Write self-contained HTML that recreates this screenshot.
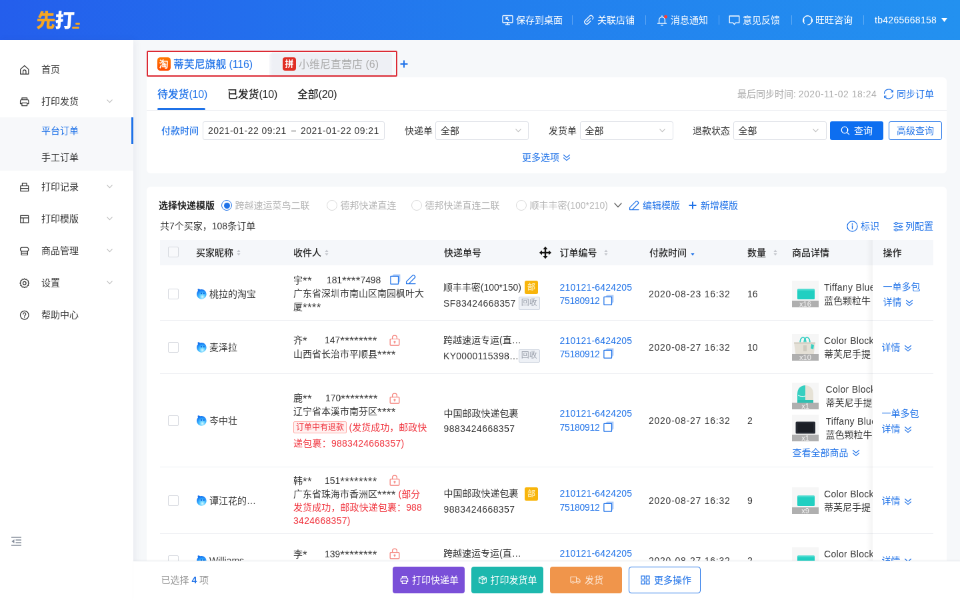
<!DOCTYPE html>
<html lang="zh-CN"><head><meta charset="utf-8"><title>先打</title>
<style>
*{box-sizing:border-box;margin:0;padding:0}
html,body{width:960px;height:600px;overflow:hidden;background:#f6f8fa}
#root{position:absolute;left:0;top:0;width:1440px;height:900px;transform:scale(0.6666667);transform-origin:0 0;will-change:transform;overflow:hidden;background:#f6f8fa;font-family:"Liberation Sans","Noto Sans CJK SC",sans-serif;font-size:14px;color:#333}
.a{position:absolute}
.t{position:absolute;white-space:nowrap;line-height:20px;font-size:14px}
.b{color:#1f72e8}
.g{color:#999}
.r{color:#f0323c}
.m{font-weight:500}
.cb{position:absolute;width:16px;height:16px;border:1px solid #d4d7dd;border-radius:2px;background:#fff}
.inp{position:absolute;border:1px solid #dcdfe6;border-radius:3px;background:#fff;height:28px}
.hl{position:absolute;height:1px;background:#e9ebef}
.btn{position:absolute;height:40px;width:108px;border-radius:4px}
.tag{position:absolute;font-size:12px;line-height:16px;height:18px;text-align:center;border-radius:2px;white-space:nowrap}
</style></head><body><div id="root">
<div class="a " style="left:0px;top:0px;width:1440px;height:60px;background:linear-gradient(90deg,#245eec 0%,#227dee 50%,#2391f0 100%)"></div>
<div class="a" style="left:53px;top:11px;font-size:29px;line-height:40px;font-weight:900;color:#fff;letter-spacing:-1px;white-space:nowrap;transform:skewX(-4deg);transform-origin:0 100%"><span style="color:#f5a623">先</span>打</div>
<div class="a " style="left:112.5px;top:33.8px;width:7.5px;height:3.7px;background:#f5a623;border-radius:1.85px"></div>
<div class="a " style="left:108px;top:39.8px;width:10.6px;height:3.7px;background:#f5a623;border-radius:1.85px"></div>
<svg class="a" style="left:753px;top:22px;" width="17" height="16" viewBox="0 0 17 16" fill="none"><rect x="1" y="1.5" width="15" height="10.5" rx="1" stroke="#fff" stroke-width="1.3" stroke-linecap="round" stroke-linejoin="round"/><path d="M5.5 14.8h6M8.5 12v2.8M6 4.5l4 4M6 4.5h2.6M6 4.5v2.6" stroke="#fff" stroke-width="1.3" stroke-linecap="round" stroke-linejoin="round"/></svg>
<div class="t " style="left:774px;top:20px;color:#fff">保存到桌面</div>
<div class="a " style="left:858px;top:23px;width:1px;height:14px;background:rgba(255,255,255,.28)"></div>
<svg class="a" style="left:875px;top:22px;" width="16" height="16" viewBox="0 0 16 16" fill="none"><g transform="rotate(45 8 8)"><path d="M11.200 7v5.200a3.200 3.200 0 0 1-6.400 0V3.200a3.200 3.200 0 0 1 6.400 0M8 4.600v7.400" stroke="#fff" stroke-width="1.3" stroke-linecap="round" stroke-linejoin="round"/></g></svg>
<div class="t " style="left:896px;top:20px;color:#fff">关联店铺</div>
<div class="a " style="left:968px;top:23px;width:1px;height:14px;background:rgba(255,255,255,.28)"></div>
<svg class="a" style="left:985px;top:21.5px;" width="16" height="17" viewBox="0 0 16 17" fill="none"><path d="M1.500 13.200h13M3.600 13.200V8a4.400 4.400 0 0 1 8.800 0v5.200M8 1.600v1.800M6.600 15.800h2.800" stroke="#fff" stroke-width="1.3" stroke-linecap="round" stroke-linejoin="round"/><circle cx="13.600" cy="3" r="2.500" fill="#ff3b30"/></svg>
<div class="t " style="left:1006px;top:20px;color:#fff">消息通知</div>
<div class="a " style="left:1078px;top:23px;width:1px;height:14px;background:rgba(255,255,255,.28)"></div>
<svg class="a" style="left:1093px;top:22.5px;" width="17" height="16" viewBox="0 0 17 16" fill="none"><path d="M1.200 1h14.600v10.200h-5.300L8.500 13.600 6.500 11.200H1.200z" stroke="#fff" stroke-width="1.3" stroke-linecap="round" stroke-linejoin="round"/></svg>
<div class="t " style="left:1114px;top:20px;color:#fff">意见反馈</div>
<div class="a " style="left:1187px;top:23px;width:1px;height:14px;background:rgba(255,255,255,.28)"></div>
<svg class="a" style="left:1202.5px;top:21.5px;" width="17" height="17" viewBox="0 0 17 17" fill="none"><path d="M3.600 13a6.700 6.700 0 1 1 7.600 1.600" stroke="#fff" stroke-width="1.3" stroke-linecap="round" stroke-linejoin="round"/><path d="M11.200 14.600l-2.400.5" stroke="#fff" stroke-width="1.3" stroke-linecap="round" stroke-linejoin="round"/><rect x="1" y="6.400" width="2.400" height="4.800" rx="1.200" fill="#fff"/><rect x="13.600" y="6.400" width="2.400" height="4.800" rx="1.200" fill="#fff"/></svg>
<div class="t " style="left:1223px;top:20px;color:#fff">旺旺咨询</div>
<div class="a " style="left:1295px;top:23px;width:1px;height:14px;background:rgba(255,255,255,.28)"></div>
<div class="t " style="left:1312px;top:20px;color:#fff;letter-spacing:.3px">tb4265668158</div>
<svg class="a" style="left:1412px;top:27px;" width="9" height="6" viewBox="0 0 9 6" fill="none"><path d="M0 0h9L4.5 6z" fill="#fff"/></svg>
<div class="a " style="left:0px;top:60px;width:200px;height:840px;background:#fff;box-shadow:3px 0 10px rgba(60,60,110,.07)"></div>
<div class="a " style="left:0px;top:176px;width:200px;height:80px;background:#f7f8fa"></div>
<div class="a " style="left:197px;top:176px;width:3px;height:40px;background:#1f72e8"></div>
<svg class="a" style="left:28.5px;top:96.5px;" width="15.5" height="15.5" viewBox="0 0 14 14" fill="none"><path d="M1.500 12.700V6.200L7 1.300l5.500 4.900v6.500zM5 12.700V9.200a2 2 0 0 1 4 0v3.500" stroke="#333" stroke-width="1.1" stroke-linecap="round" stroke-linejoin="round"/></svg>
<div class="t " style="left:62px;top:94px;">首页</div>
<svg class="a" style="left:28.5px;top:144.5px;" width="15.5" height="15.5" viewBox="0 0 14 14" fill="none"><path d="M3.5 4.2V1.6h7v2.6M3.5 12.4v-4h7v4zM1.4 9.6h2.1M10.5 9.6h2.1a0 0 0 0 0 0 0V5.8a1.6 1.6 0 0 0-1.6-1.6H3a1.6 1.6 0 0 0-1.6 1.6v3.8" stroke="#333" stroke-width="1.1" stroke-linecap="round" stroke-linejoin="round"/></svg>
<div class="t " style="left:62px;top:142px;">打印发货</div>
<svg class="a" style="left:160px;top:149px;" width="9" height="6" viewBox="0 0 9 6" fill="none"><path d="M0.8 0.8l3.7 3.9 3.7-3.9" stroke="#bbb" stroke-width="1.1" stroke-linecap="round" stroke-linejoin="round"/></svg>
<div class="t b" style="left:62px;top:186px;">平台订单</div>
<div class="t " style="left:62px;top:226px;">手工订单</div>
<svg class="a" style="left:28.5px;top:272.5px;" width="15.5" height="15.5" viewBox="0 0 14 14" fill="none"><path d="M1.6 5.2h10.8v7.2H1.6zM4 5.2V1.6h6v3.6M1.6 8.6h10.8" stroke="#333" stroke-width="1.1" stroke-linecap="round" stroke-linejoin="round"/></svg>
<div class="t " style="left:62px;top:270px;">打印记录</div>
<svg class="a" style="left:160px;top:277px;" width="9" height="6" viewBox="0 0 9 6" fill="none"><path d="M0.8 0.8l3.7 3.9 3.7-3.9" stroke="#bbb" stroke-width="1.1" stroke-linecap="round" stroke-linejoin="round"/></svg>
<svg class="a" style="left:28.5px;top:320.5px;" width="15.5" height="15.5" viewBox="0 0 14 14" fill="none"><path d="M1.6 2.2h10.8v9.6H1.6zM1.6 5.4h10.8M5.4 5.4v6.4" stroke="#333" stroke-width="1.1" stroke-linecap="round" stroke-linejoin="round"/></svg>
<div class="t " style="left:62px;top:318px;">打印模版</div>
<svg class="a" style="left:160px;top:325px;" width="9" height="6" viewBox="0 0 9 6" fill="none"><path d="M0.8 0.8l3.7 3.9 3.7-3.9" stroke="#bbb" stroke-width="1.1" stroke-linecap="round" stroke-linejoin="round"/></svg>
<svg class="a" style="left:28.5px;top:368.5px;" width="15.5" height="15.5" viewBox="0 0 14 14" fill="none"><path d="M2.8 7.2v5h8.4v-5M1.4 4.6a2.6 2.6 0 0 1 2.6-2.6h6a2.6 2.6 0 0 1 2.6 2.6v0a2.6 2.6 0 0 1-2.6 2.6H4a2.6 2.6 0 0 1-2.6-2.6zM2.8 9.8h8.4" stroke="#333" stroke-width="1.1" stroke-linecap="round" stroke-linejoin="round"/></svg>
<div class="t " style="left:62px;top:366px;">商品管理</div>
<svg class="a" style="left:160px;top:373px;" width="9" height="6" viewBox="0 0 9 6" fill="none"><path d="M0.8 0.8l3.7 3.9 3.7-3.9" stroke="#bbb" stroke-width="1.1" stroke-linecap="round" stroke-linejoin="round"/></svg>
<svg class="a" style="left:28.5px;top:416.5px;" width="15.5" height="15.5" viewBox="0 0 14 14" fill="none"><circle cx="7" cy="7" r="2.1" stroke="#333" stroke-width="1.1" stroke-linecap="round" stroke-linejoin="round"/><path d="M7 1.3l1.3 1.2 1.8-.4.6 1.7 1.7.6-.4 1.8L13.2 7.4 12 8.7l.4 1.8-1.7.6-.6 1.7-1.8-.4L7 13.6 5.7 12.4l-1.8.4-.6-1.7-1.7-.6.4-1.8L.8 7.4 2 6.1l-.4-1.8 1.7-.6.6-1.7 1.8.4z" stroke="#333" stroke-width="1.1" stroke-linecap="round" stroke-linejoin="round" transform="translate(0 -0.4)"/></svg>
<div class="t " style="left:62px;top:414px;">设置</div>
<svg class="a" style="left:160px;top:421px;" width="9" height="6" viewBox="0 0 9 6" fill="none"><path d="M0.8 0.8l3.7 3.9 3.7-3.9" stroke="#bbb" stroke-width="1.1" stroke-linecap="round" stroke-linejoin="round"/></svg>
<svg class="a" style="left:28.5px;top:464.5px;" width="15.5" height="15.5" viewBox="0 0 14 14" fill="none"><circle cx="7" cy="7" r="5.7" stroke="#333" stroke-width="1.1" stroke-linecap="round" stroke-linejoin="round"/><path d="M5.2 5.6a1.8 1.8 0 1 1 2.6 1.6c-.5.3-.8.7-.8 1.3M7 10.2v.2" stroke="#333" stroke-width="1.1" stroke-linecap="round" stroke-linejoin="round"/></svg>
<div class="t " style="left:62px;top:462px;">帮助中心</div>
<svg class="a" style="left:16.5px;top:805px;" width="15" height="14" viewBox="0 0 15 14" fill="none"><path d="M0 1h15M6.500 5h8.500M6.500 9h8.500M0 13h15" stroke="#858d9b" stroke-width="1.300"/><path d="M0.300 7l4.200-3v6z" fill="#858d9b"/></svg>
<div class="a " style="left:220px;top:116px;width:1200px;height:144px;background:#fff;border-radius:0 6px 6px 6px"></div>
<div class="a " style="left:222px;top:78px;width:186px;height:38px;background:#fff"></div>
<div class="a " style="left:404px;top:80px;width:184px;height:36px;background:linear-gradient(90deg,#f6f7fa,#eef0f5 5px);border-radius:4px 4px 0 0"></div>
<div class="a " style="left:235.5px;top:86px;width:20px;height:20px;background:linear-gradient(180deg,#ff7a00,#ff4a00);border-radius:4.5px;color:#fff;font-size:14px;line-height:20px;text-align:center;font-weight:bold">淘</div>
<div class="t " style="left:260px;top:87px;font-size:16px;font-weight:500;color:#1f72e8;letter-spacing:-.15px">蒂芙尼旗舰 (116)</div>
<div class="a " style="left:424px;top:86px;width:20px;height:20px;background:#e02e24;border-radius:4px;color:#fff;font-size:13px;line-height:20px;text-align:center;font-weight:bold">拼</div>
<div class="t " style="left:448px;top:87px;font-size:16px;color:#aaa">小维尼直营店 (6)</div>
<div class="a " style="left:220px;top:76px;width:376px;height:39px;border:2px solid #dc2b35;border-radius:2px"></div>
<svg class="a" style="left:600px;top:90px;" width="12" height="12" viewBox="0 0 12 12" fill="none"><path d="M6 0.5v11M0.5 6h11" stroke="#1f72e8" stroke-width="2"/></svg>
<div class="t " style="left:236px;top:132px;font-size:16px;font-weight:500;color:#1f72e8;letter-spacing:-.2px">待发货(10)</div>
<div class="t " style="left:341px;top:132px;font-size:16px;font-weight:500;color:#222;letter-spacing:-.2px">已发货(10)</div>
<div class="t " style="left:446px;top:132px;font-size:16px;font-weight:500;color:#222;letter-spacing:-.2px">全部(20)</div>
<div class="a " style="left:236px;top:162px;width:72px;height:3px;background:#1f72e8;border-radius:2px"></div>
<div class="a " style="left:220px;top:165px;width:1200px;height:1px;background:#eceef2"></div>
<div class="t " style="left:1106px;top:131px;color:#aaa">最后同步时间: <span style="letter-spacing:.5px">2020-11-02 18:24</span></div>
<svg class="a" style="left:1324.5px;top:132.5px;" width="16" height="16" viewBox="0 0 16 16" fill="none"><path d="M1.500 7.200a6.500 6.500 0 0 1 12.400-2.400M14.500 8.800a6.500 6.500 0 0 1-12.400 2.400M14.300 2.400v2.600h-2.600M1.700 13.600v-2.600h2.600" stroke="#1f72e8" stroke-width="1.200" stroke-linecap="round" stroke-linejoin="round"/></svg>
<div class="t b" style="left:1345px;top:131px;">同步订单</div>
<div class="t b" style="left:242px;top:186px;font-weight:500">付款时间</div>
<div class="a inp" style="left:304px;top:182px;width:273px;height:28px;"></div>
<div class="t " style="left:312px;top:186px;color:#333;letter-spacing:.45px">2021-01-22 09:21</div>
<div class="a " style="left:436.5px;top:195.5px;width:7.5px;height:1.2px;background:#444"></div>
<div class="t " style="left:451px;top:186px;color:#333;letter-spacing:.45px">2021-01-22 09:21</div>
<div class="t " style="left:607px;top:186px;">快递单</div>
<div class="a inp" style="left:653px;top:182px;width:140px;height:28px;"></div>
<div class="t " style="left:661px;top:186px;">全部</div>
<svg class="a" style="left:772.5px;top:193px;" width="9" height="6" viewBox="0 0 9 6" fill="none"><path d="M0.8 0.8l3.7 3.9 3.7-3.9" stroke="#bbb" stroke-width="1.1" stroke-linecap="round" stroke-linejoin="round"/></svg>
<div class="t " style="left:823px;top:186px;">发货单</div>
<div class="a inp" style="left:869.5px;top:182px;width:140px;height:28px;"></div>
<div class="t " style="left:877.5px;top:186px;">全部</div>
<svg class="a" style="left:989.0px;top:193px;" width="9" height="6" viewBox="0 0 9 6" fill="none"><path d="M0.8 0.8l3.7 3.9 3.7-3.9" stroke="#bbb" stroke-width="1.1" stroke-linecap="round" stroke-linejoin="round"/></svg>
<div class="t " style="left:1039px;top:186px;">退款状态</div>
<div class="a inp" style="left:1099.5px;top:182px;width:140px;height:28px;"></div>
<div class="t " style="left:1107.5px;top:186px;">全部</div>
<svg class="a" style="left:1219.0px;top:193px;" width="9" height="6" viewBox="0 0 9 6" fill="none"><path d="M0.8 0.8l3.7 3.9 3.7-3.9" stroke="#bbb" stroke-width="1.1" stroke-linecap="round" stroke-linejoin="round"/></svg>
<div class="a " style="left:1245px;top:182px;width:80px;height:28px;background:#0d6ef0;border-radius:3px"></div>
<svg class="a" style="left:1261px;top:189px;" width="14" height="14" viewBox="0 0 14 14" fill="none"><circle cx="6" cy="6" r="4.8" stroke="#fff" stroke-width="1.3"/><path d="M9.6 9.6l3 3" stroke="#fff" stroke-width="1.3" stroke-linecap="round"/></svg>
<div class="t " style="left:1281px;top:186px;color:#fff">查询</div>
<div class="a " style="left:1333px;top:182px;width:80px;height:28px;background:#fff;border:1px solid #1f72e8;border-radius:3px"></div>
<div class="t b" style="left:1345px;top:186px;">高级查询</div>
<div class="t b" style="left:783px;top:225.5px;">更多选项</div>
<svg class="a" style="left:844px;top:230.5px;" width="12" height="11" viewBox="0 0 12 11" fill="none"><path d="M1.5 1.5l4.5 3.8 4.5-3.8M1.5 5.8l4.5 3.8 4.5-3.8" stroke="#1f72e8" stroke-width="1.2" stroke-linecap="round" stroke-linejoin="round"/></svg>
<div class="a " style="left:220px;top:280px;width:1200px;height:640px;background:#fff;border-radius:6px"></div>
<div class="t " style="left:238px;top:298px;font-weight:bold;color:#222">选择快递模版</div>
<div class="a " style="left:332px;top:300px;width:16px;height:16px;border:1px solid #1f72e8;border-radius:50%;background:#fff"></div>
<div class="a " style="left:335.5px;top:303.5px;width:9px;height:9px;border-radius:50%;background:#1f72e8"></div>
<div class="t " style="left:352.5px;top:298px;color:#b4b4b4">跨越速运菜鸟二联</div>
<div class="a " style="left:490px;top:300px;width:16px;height:16px;border:1px solid #d9d9d9;border-radius:50%;background:#fff"></div>
<div class="t " style="left:510.5px;top:298px;color:#b4b4b4">德邦快递直连</div>
<div class="a " style="left:617px;top:300px;width:16px;height:16px;border:1px solid #d9d9d9;border-radius:50%;background:#fff"></div>
<div class="t " style="left:637.5px;top:298px;color:#b4b4b4">德邦快递直连二联</div>
<div class="a " style="left:774px;top:300px;width:16px;height:16px;border:1px solid #d9d9d9;border-radius:50%;background:#fff"></div>
<div class="t " style="left:794.5px;top:298px;color:#b4b4b4">顺丰丰密(100*210)</div>
<svg class="a" style="left:921px;top:304px;" width="12" height="8" viewBox="0 0 12 8" fill="none"><path d="M1 1l5 5.4 5-5.4" stroke="#666" stroke-width="1.4" stroke-linecap="round" stroke-linejoin="round"/></svg>
<svg class="a" style="left:943px;top:300px;" width="16" height="16" viewBox="0 0 16 16" fill="none"><path d="M1.600 14.600h13.400M1.600 14.600v-3.200l9.300-9.300a1.600 1.600 0 0 1 2.300 0l1.100 1.100a1.600 1.600 0 0 1 0 2.300l-9.100 9.100" stroke="#1f72e8" stroke-width="1.300" stroke-linecap="round" stroke-linejoin="round"/></svg>
<div class="t b" style="left:964px;top:298px;">编辑模版</div>
<svg class="a" style="left:1033px;top:302px;" width="12" height="12" viewBox="0 0 12 12" fill="none"><path d="M6 0.5v11M0.5 6h11" stroke="#1f72e8" stroke-width="2"/></svg>
<div class="t b" style="left:1051px;top:298px;">新增模版</div>
<div class="t " style="left:240px;top:329px;color:#333">共7个买家，108条订单</div>
<svg class="a" style="left:1270px;top:330.5px;" width="17" height="17" viewBox="0 0 17 17" fill="none"><circle cx="8.500" cy="8.500" r="7.600" stroke="#1f72e8" stroke-width="1.200"/><path d="M8.500 7.600v4.600" stroke="#1f72e8" stroke-width="1.400" stroke-linecap="round"/><circle cx="8.500" cy="5" r=".95" fill="#1f72e8"/></svg>
<div class="t b" style="left:1291px;top:329px;">标识</div>
<svg class="a" style="left:1339.5px;top:332.5px;" width="15" height="14" viewBox="0 0 15 14" fill="none"><path d="M1 2.200h13M1 7h13M1 11.800h13" stroke="#1f72e8" stroke-width="1.300" stroke-linecap="round"/><circle cx="4.200" cy="2.200" r="1.700" fill="#fff" stroke="#1f72e8" stroke-width="1.200"/><circle cx="10.600" cy="7" r="1.700" fill="#fff" stroke="#1f72e8" stroke-width="1.200"/><circle cx="4.200" cy="11.800" r="1.700" fill="#fff" stroke="#1f72e8" stroke-width="1.200"/></svg>
<div class="t b" style="left:1358px;top:329px;">列配置</div>
<div class="a " style="left:240px;top:360px;width:1160px;height:38px;background:#f5f7fa"></div>
<div class="cb" style="left:252px;top:370px;background:#f8f9fb"></div>
<div class="t " style="left:294px;top:368.5px;font-weight:500;color:#222">买家昵称</div>
<svg class="a" style="left:354.5px;top:374px;" width="6" height="10" viewBox="0 0 6 10" fill="none"><path d="M3 0.6L5.6 4H0.4z" fill="#c5c8ce"/><path d="M3 9.4L5.6 6H0.4z" fill="#c5c8ce"/></svg>
<div class="t " style="left:440px;top:368.5px;font-weight:500;color:#222">收件人</div>
<svg class="a" style="left:486.5px;top:374px;" width="6" height="10" viewBox="0 0 6 10" fill="none"><path d="M3 0.6L5.6 4H0.4z" fill="#c5c8ce"/><path d="M3 9.4L5.6 6H0.4z" fill="#c5c8ce"/></svg>
<div class="t " style="left:666px;top:368.5px;font-weight:500;color:#222">快递单号</div>
<div class="t " style="left:839.5px;top:368.5px;font-weight:500;color:#222">订单编号</div>
<svg class="a" style="left:906px;top:374px;" width="6" height="10" viewBox="0 0 6 10" fill="none"><path d="M3 0.6L5.6 4H0.4z" fill="#c5c8ce"/><path d="M3 9.4L5.6 6H0.4z" fill="#c5c8ce"/></svg>
<div class="t " style="left:974px;top:368.5px;font-weight:500;color:#222">付款时间</div>
<svg class="a" style="left:1035.5px;top:374px;" width="6" height="10" viewBox="0 0 6 10" fill="none"><path d="M3 0.6L5.6 4H0.4z" fill="#f5f7fa"/><path d="M3 9.4L5.6 6H0.4z" fill="#1f72e8"/></svg>
<div class="t " style="left:1121px;top:368.5px;font-weight:500;color:#222">数量</div>
<svg class="a" style="left:1160px;top:374px;" width="6" height="10" viewBox="0 0 6 10" fill="none"><path d="M3 0.6L5.6 4H0.4z" fill="#c5c8ce"/><path d="M3 9.4L5.6 6H0.4z" fill="#c5c8ce"/></svg>
<div class="t " style="left:1188px;top:368.5px;font-weight:500;color:#222">商品详情</div>
<svg class="a" style="left:808px;top:368.5px;" width="20" height="20" viewBox="0 0 20 20" fill="none"><path d="M10 0.8L13.6 5H11.2V8.8H15V6.4L19.2 10 15 13.6V11.2H11.2V15H13.6L10 19.2 6.4 15H8.8V11.2H5V13.6L0.8 10 5 6.4V8.8H8.8V5H6.4z" fill="#111" stroke="#fff" stroke-width="1" stroke-linejoin="round" paint-order="stroke"/></svg>
<svg width="0" height="0" style="position:absolute"><defs><radialGradient id="ww" cx=".58" cy=".78" r=".72"><stop offset="0" stop-color="#d4f9ff"/><stop offset=".42" stop-color="#4fc6ff"/><stop offset=".85" stop-color="#1a86f7"/><stop offset="1" stop-color="#1672ee"/></radialGradient></defs></svg>
<div class="cb" style="left:252px;top:433px"></div>
<svg class="a" style="left:293.5px;top:432.2px;" width="16.5" height="17.6" viewBox="0 0 15 16" fill="none"><path d="M2.6 1.2c1.2-.2 2.3.2 3 .9a6.6 6.6 0 0 1 2-.3c3.7 0 6.6 3 6.6 6.7s-2.900 6.700-6.600 6.700S1 12.200 1 8.500c0-1.800.7-3.400 1.800-4.600-.5-.8-.6-1.800-.2-2.700z" fill="url(#ww)"/><ellipse cx="7.400" cy="7.400" rx=".8" ry="1" fill="#0b55d8"/><ellipse cx="10.800" cy="7.400" rx=".8" ry="1" fill="#0b55d8"/></svg>
<div class="t " style="left:314px;top:430.5px;">桃拉的淘宝</div>
<div class="t " style="left:440px;top:409.5px;">宇<span style="font-size:17px;letter-spacing:.3px;position:relative;top:2.3px;line-height:10px">**</span></div>
<div class="t " style="left:490px;top:409.5px;letter-spacing:-.15px">181<span style="font-size:17px;letter-spacing:.3px;position:relative;top:2.3px;line-height:10px">****</span>7498</div>
<svg class="a" style="left:584.5px;top:410.5px;" width="16" height="16" viewBox="0 0 16 16" fill="none"><path d="M2.600 3.600l2.800-3h10v10.400l-2.800 2.800z" fill="#a9c9f8"/><rect x=".9" y="3.400" width="11.600" height="11.600" rx=".3" fill="#fff" stroke="#1f72e8" stroke-width="1.250"/></svg>
<svg class="a" style="left:608px;top:410.5px;" width="16" height="16" viewBox="0 0 16 16" fill="none"><path d="M1.600 14.600h13.400M1.600 14.600v-3.200l9.300-9.300a1.600 1.600 0 0 1 2.300 0l1.100 1.100a1.600 1.600 0 0 1 0 2.300l-9.100 9.100" stroke="#1f72e8" stroke-width="1.300" stroke-linecap="round" stroke-linejoin="round"/></svg>
<div class="t " style="left:440px;top:429.5px;">广东省深圳市南山区南园枫叶大</div>
<div class="t " style="left:440px;top:449.5px;">厦<span style="font-size:17px;letter-spacing:.3px;position:relative;top:2.3px;line-height:10px">****</span></div>
<div class="t " style="left:665px;top:420.5px;letter-spacing:-.05px">顺丰丰密(100*150)</div>
<div class="a " style="left:787px;top:421px;width:20px;height:20px;background:#f8b50c;border-radius:2.5px;color:#fff1c4;font-size:12px;font-weight:500;line-height:20px;text-align:center">部</div>
<div class="t " style="left:665px;top:445px;letter-spacing:.4px">SF83424668357</div>
<div class="a " style="left:778px;top:445px;width:31.5px;height:19.5px;background:#eef1f6;border:1px solid #cdd4df;border-radius:2px;color:#9aa0ab;font-size:12px;line-height:17.5px;text-align:center">回收</div>
<div class="t b" style="left:839.5px;top:420.5px;letter-spacing:.2px">210121-6424205</div>
<div class="t b" style="left:839.5px;top:441px;letter-spacing:-.3px">75180912</div>
<svg class="a" style="left:904.5px;top:442.0px;" width="16" height="16" viewBox="0 0 16 16" fill="none"><path d="M2.600 3.600l2.800-3h10v10.400l-2.800 2.800z" fill="#a9c9f8"/><rect x=".9" y="3.400" width="11.600" height="11.600" rx=".3" fill="#fff" stroke="#1f72e8" stroke-width="1.250"/></svg>
<div class="t " style="left:973px;top:431px;letter-spacing:.75px">2020-08-23 16:32</div>
<div class="t " style="left:1121px;top:431px;">16</div>
<svg class="a" style="left:1188px;top:421px;" width="40" height="40" viewBox="0 0 40 40" fill="none"><rect width="40" height="40" fill="#f6f6f6"/><rect x="8" y="12.5" width="26" height="15.5" rx="1.5" fill="#21cfc1"/><rect x="8" y="12.5" width="26" height="2.2" rx="1" fill="#4adbd0"/><rect y="30" width="40" height="10" fill="#a8a8a8" fill-opacity=".92"/><text x="20" y="39" font-size="11" fill="#f4f4f4" text-anchor="middle" font-family="Liberation Sans, sans-serif">x16</text></svg>
<div class="a" style="left:1236px;top:421px;width:73px;height:40px;overflow:hidden"><div class="t" style="left:0;top:0;letter-spacing:.3px">Tiffany Blue</div><div class="t" style="left:0;top:20px">蓝色颗粒牛</div></div>
<div class="a " style="left:240px;top:480px;width:1160px;height:1px;background:#eceef2"></div>
<div class="cb" style="left:252px;top:513px"></div>
<svg class="a" style="left:293.5px;top:512.2px;" width="16.5" height="17.6" viewBox="0 0 15 16" fill="none"><path d="M2.6 1.2c1.2-.2 2.3.2 3 .9a6.6 6.6 0 0 1 2-.3c3.7 0 6.6 3 6.6 6.7s-2.900 6.700-6.600 6.700S1 12.200 1 8.500c0-1.800.7-3.400 1.800-4.600-.5-.8-.6-1.800-.2-2.700z" fill="url(#ww)"/><ellipse cx="7.400" cy="7.400" rx=".8" ry="1" fill="#0b55d8"/><ellipse cx="10.800" cy="7.400" rx=".8" ry="1" fill="#0b55d8"/></svg>
<div class="t " style="left:314px;top:510.5px;">麦泽拉</div>
<div class="t " style="left:440px;top:500px;">齐<span style="font-size:17px;letter-spacing:.3px;position:relative;top:2.3px;line-height:10px">*</span></div>
<div class="t " style="left:487px;top:500px;">147<span style="font-size:17px;letter-spacing:.3px;position:relative;top:2.3px;line-height:10px">********</span></div>
<svg class="a" style="left:584px;top:501.5px;" width="16" height="17" viewBox="0 0 16 17" fill="none"><rect x="1.200" y="6.600" width="13.600" height="9.400" rx="1" stroke="#f47f78" stroke-width="1.300"/><path d="M4.600 6.600V4.600a3.400 3.400 0 0 1 6.800 0v.8" stroke="#f47f78" stroke-width="1.300" stroke-linecap="round"/><path d="M8 9.800v3M6.800 10.800h2.400" stroke="#f47f78" stroke-width="1.300" stroke-linecap="round"/></svg>
<div class="t " style="left:440px;top:520.5px;">山西省长治市平顺县<span style="font-size:17px;letter-spacing:.3px;position:relative;top:2.3px;line-height:10px">****</span></div>
<div class="t " style="left:665px;top:499.5px;">跨越速运专运(直…</div>
<div class="t " style="left:665px;top:524px;letter-spacing:.3px">KY0000115398…</div>
<div class="a " style="left:778px;top:524px;width:31.5px;height:19.5px;background:#eef1f6;border:1px solid #cdd4df;border-radius:2px;color:#9aa0ab;font-size:12px;line-height:17.5px;text-align:center">回收</div>
<div class="t b" style="left:839.5px;top:500.5px;letter-spacing:.2px">210121-6424205</div>
<div class="t b" style="left:839.5px;top:521px;letter-spacing:-.3px">75180912</div>
<svg class="a" style="left:904.5px;top:522.0px;" width="16" height="16" viewBox="0 0 16 16" fill="none"><path d="M2.600 3.600l2.800-3h10v10.400l-2.800 2.800z" fill="#a9c9f8"/><rect x=".9" y="3.400" width="11.600" height="11.600" rx=".3" fill="#fff" stroke="#1f72e8" stroke-width="1.250"/></svg>
<div class="t " style="left:973px;top:511px;letter-spacing:.75px">2020-08-27 16:32</div>
<div class="t " style="left:1121px;top:511px;">10</div>
<svg class="a" style="left:1188px;top:501px;" width="40" height="40" viewBox="0 0 40 40" fill="none"><rect width="40" height="40" fill="#f6f6f6"/><path d="M12 14c0-12 9-12 9 0M18 14c0-12 9-12 9 0" stroke="#35cfc2" stroke-width="1.7" fill="none"/><path d="M3 12.5h32l-2.500 19H5.500z" fill="#e4e0d6"/><path d="M3 12.5h32l-.3 2.200H3.300z" fill="#d3cfc4"/><rect x="17" y="17" width="5" height="9" fill="#cfcbc0"/><path d="M29 15l4 1.500-1 6.500-4-1.500z" fill="#35cfc2"/><rect y="30" width="40" height="10" fill="#a8a8a8" fill-opacity=".92"/><text x="20" y="39" font-size="11" fill="#f4f4f4" text-anchor="middle" font-family="Liberation Sans, sans-serif">x10</text></svg>
<div class="a" style="left:1236px;top:501px;width:73px;height:40px;overflow:hidden"><div class="t" style="left:0;top:0;letter-spacing:.3px">Color Block</div><div class="t" style="left:0;top:20px">蒂芙尼手提</div></div>
<div class="a " style="left:240px;top:560px;width:1160px;height:1px;background:#eceef2"></div>
<div class="cb" style="left:252px;top:623px"></div>
<svg class="a" style="left:293.5px;top:622.2px;" width="16.5" height="17.6" viewBox="0 0 15 16" fill="none"><path d="M2.6 1.2c1.2-.2 2.3.2 3 .9a6.6 6.6 0 0 1 2-.3c3.7 0 6.6 3 6.6 6.7s-2.900 6.700-6.600 6.700S1 12.200 1 8.500c0-1.800.7-3.400 1.800-4.600-.5-.8-.6-1.800-.2-2.700z" fill="url(#ww)"/><ellipse cx="7.400" cy="7.400" rx=".8" ry="1" fill="#0b55d8"/><ellipse cx="10.800" cy="7.400" rx=".8" ry="1" fill="#0b55d8"/></svg>
<div class="t " style="left:314px;top:620.5px;">岑中壮</div>
<div class="t " style="left:440px;top:587px;">鹿<span style="font-size:17px;letter-spacing:.3px;position:relative;top:2.3px;line-height:10px">**</span></div>
<div class="t " style="left:488px;top:587px;">170<span style="font-size:17px;letter-spacing:.3px;position:relative;top:2.3px;line-height:10px">********</span></div>
<svg class="a" style="left:584px;top:588.5px;" width="16" height="17" viewBox="0 0 16 17" fill="none"><rect x="1.200" y="6.600" width="13.600" height="9.400" rx="1" stroke="#f47f78" stroke-width="1.300"/><path d="M4.600 6.600V4.600a3.400 3.400 0 0 1 6.800 0v.8" stroke="#f47f78" stroke-width="1.300" stroke-linecap="round"/><path d="M8 9.800v3M6.800 10.800h2.400" stroke="#f47f78" stroke-width="1.300" stroke-linecap="round"/></svg>
<div class="t " style="left:440px;top:606.5px;">辽宁省本溪市南芬区<span style="font-size:17px;letter-spacing:.3px;position:relative;top:2.3px;line-height:10px">****</span></div>
<div class="a " style="left:440px;top:632px;width:80px;height:18px;background:#fff1f0;border:1px solid #ffa8a3;border-radius:2px;color:#f0323c;font-size:12px;line-height:16px;text-align:center">订单中有退款</div>
<div class="t r" style="left:523.5px;top:630.5px;">(发货成功，邮政快</div>
<div class="t r" style="left:440px;top:655px;letter-spacing:.25px">递包裹：9883424668357)</div>
<div class="t " style="left:665.5px;top:609.5px;">中国邮政快递包裹</div>
<div class="t " style="left:665.5px;top:633px;letter-spacing:.45px">9883424668357</div>
<div class="t b" style="left:839.5px;top:610.0px;letter-spacing:.2px">210121-6424205</div>
<div class="t b" style="left:839.5px;top:630.5px;letter-spacing:-.3px">75180912</div>
<svg class="a" style="left:904.5px;top:631.5px;" width="16" height="16" viewBox="0 0 16 16" fill="none"><path d="M2.600 3.600l2.800-3h10v10.400l-2.800 2.800z" fill="#a9c9f8"/><rect x=".9" y="3.400" width="11.600" height="11.600" rx=".3" fill="#fff" stroke="#1f72e8" stroke-width="1.250"/></svg>
<div class="t " style="left:973px;top:621px;letter-spacing:.75px">2020-08-27 16:32</div>
<div class="t " style="left:1121px;top:621px;">2</div>
<svg class="a" style="left:1188px;top:574px;" width="40" height="40" viewBox="0 0 40 40" fill="none"><rect width="40" height="40" fill="#f6f6f6"/><clipPath id="pk"><path d="M8 31V17C8 9 13 4 20 4s12 5 12 13v14z"/></clipPath><g clip-path="url(#pk)"><rect x="0" y="0" width="20" height="40" fill="#35cfc0"/><rect x="20" y="0" width="20" height="40" fill="#e6e2d6"/><path d="M9 19c4 2 8 2 11 1" stroke="#fff" stroke-width="1" fill="none"/><rect x="8" y="26" width="24" height="6" fill="#2fc0b2"/></g><rect y="30" width="40" height="10" fill="#a8a8a8" fill-opacity=".92"/><text x="20" y="39" font-size="11" fill="#f4f4f4" text-anchor="middle" font-family="Liberation Sans, sans-serif">x1</text></svg>
<div class="a" style="left:1238.5px;top:574px;width:70.5px;height:40px;overflow:hidden"><div class="t" style="left:0;top:0;letter-spacing:.3px">Color Block</div><div class="t" style="left:0;top:20px">蒂芙尼手提</div></div>
<svg class="a" style="left:1188px;top:622px;" width="40" height="40" viewBox="0 0 40 40" fill="none"><rect width="40" height="40" fill="#f6f6f6"/><rect x="5.5" y="10.5" width="29.500" height="18" rx="1.500" fill="#262a33"/><rect x="8.500" y="13" width="23.500" height="13" fill="#1b1e25"/><rect y="30" width="40" height="10" fill="#a8a8a8" fill-opacity=".92"/><text x="20" y="39" font-size="11" fill="#f4f4f4" text-anchor="middle" font-family="Liberation Sans, sans-serif">x1</text></svg>
<div class="a" style="left:1238.5px;top:622px;width:70.5px;height:40px;overflow:hidden"><div class="t" style="left:0;top:0;letter-spacing:.3px">Tiffany Blue</div><div class="t" style="left:0;top:20px">蓝色颗粒牛</div></div>
<div class="t b" style="left:1188.5px;top:669px;">查看全部商品</div>
<svg class="a" style="left:1278px;top:674px;" width="12" height="11" viewBox="0 0 12 11" fill="none"><path d="M1.5 1.5l4.5 3.8 4.5-3.8M1.5 5.8l4.5 3.8 4.5-3.8" stroke="#1f72e8" stroke-width="1.2" stroke-linecap="round" stroke-linejoin="round"/></svg>
<div class="a " style="left:240px;top:699.5px;width:1160px;height:1px;background:#eceef2"></div>
<div class="cb" style="left:252px;top:743px"></div>
<svg class="a" style="left:293.5px;top:742.2px;" width="16.5" height="17.6" viewBox="0 0 15 16" fill="none"><path d="M2.6 1.2c1.2-.2 2.3.2 3 .9a6.6 6.6 0 0 1 2-.3c3.7 0 6.6 3 6.6 6.7s-2.900 6.700-6.600 6.700S1 12.200 1 8.500c0-1.800.7-3.400 1.800-4.600-.5-.8-.6-1.800-.2-2.700z" fill="url(#ww)"/><ellipse cx="7.400" cy="7.400" rx=".8" ry="1" fill="#0b55d8"/><ellipse cx="10.800" cy="7.400" rx=".8" ry="1" fill="#0b55d8"/></svg>
<div class="t " style="left:314px;top:740.5px;">谭江花的…</div>
<div class="t " style="left:440px;top:710.5px;">韩<span style="font-size:17px;letter-spacing:.3px;position:relative;top:2.3px;line-height:10px">**</span></div>
<div class="t " style="left:487px;top:710.5px;">151<span style="font-size:17px;letter-spacing:.3px;position:relative;top:2.3px;line-height:10px">********</span></div>
<svg class="a" style="left:584px;top:712.0px;" width="16" height="17" viewBox="0 0 16 17" fill="none"><rect x="1.200" y="6.600" width="13.600" height="9.400" rx="1" stroke="#f47f78" stroke-width="1.300"/><path d="M4.600 6.600V4.600a3.400 3.400 0 0 1 6.800 0v.8" stroke="#f47f78" stroke-width="1.300" stroke-linecap="round"/><path d="M8 9.800v3M6.800 10.800h2.400" stroke="#f47f78" stroke-width="1.300" stroke-linecap="round"/></svg>
<div class="t " style="left:440px;top:730.5px;">广东省珠海市香洲区<span style="font-size:17px;letter-spacing:.3px;position:relative;top:2.3px;line-height:10px">****</span> <span class="r">(部分</span></div>
<div class="t r" style="left:440px;top:750.5px;letter-spacing:.1px">发货成功，邮政快递包裹：988</div>
<div class="t r" style="left:440px;top:770.5px;letter-spacing:.3px">3424668357)</div>
<div class="t " style="left:665.5px;top:730px;">中国邮政快递包裹</div>
<div class="a " style="left:787px;top:730.5px;width:20px;height:20px;background:#f8b50c;border-radius:2.5px;color:#fff1c4;font-size:12px;font-weight:500;line-height:20px;text-align:center">部</div>
<div class="t " style="left:665.5px;top:754px;letter-spacing:.45px">9883424668357</div>
<div class="t b" style="left:839.5px;top:730.0px;letter-spacing:.2px">210121-6424205</div>
<div class="t b" style="left:839.5px;top:750.5px;letter-spacing:-.3px">75180912</div>
<svg class="a" style="left:904.5px;top:751.5px;" width="16" height="16" viewBox="0 0 16 16" fill="none"><path d="M2.600 3.600l2.800-3h10v10.400l-2.800 2.800z" fill="#a9c9f8"/><rect x=".9" y="3.400" width="11.600" height="11.600" rx=".3" fill="#fff" stroke="#1f72e8" stroke-width="1.250"/></svg>
<div class="t " style="left:973px;top:741px;letter-spacing:.75px">2020-08-27 16:32</div>
<div class="t " style="left:1121px;top:741px;">9</div>
<svg class="a" style="left:1188px;top:731px;" width="40" height="40" viewBox="0 0 40 40" fill="none"><rect width="40" height="40" fill="#f6f6f6"/><rect x="8" y="12.5" width="26" height="15.5" rx="1.5" fill="#21cfc1"/><rect x="8" y="12.5" width="26" height="2.2" rx="1" fill="#4adbd0"/><rect y="30" width="40" height="10" fill="#a8a8a8" fill-opacity=".92"/><text x="20" y="39" font-size="11" fill="#f4f4f4" text-anchor="middle" font-family="Liberation Sans, sans-serif">x9</text></svg>
<div class="a" style="left:1236px;top:731px;width:73px;height:40px;overflow:hidden"><div class="t" style="left:0;top:0;letter-spacing:.3px">Color Block</div><div class="t" style="left:0;top:20px">蒂芙尼手提</div></div>
<div class="a " style="left:240px;top:800px;width:1160px;height:1px;background:#eceef2"></div>
<div class="cb" style="left:252px;top:833px"></div>
<svg class="a" style="left:293.5px;top:832.2px;" width="16.5" height="17.6" viewBox="0 0 15 16" fill="none"><path d="M2.6 1.2c1.2-.2 2.3.2 3 .9a6.6 6.6 0 0 1 2-.3c3.7 0 6.6 3 6.6 6.7s-2.900 6.700-6.600 6.700S1 12.200 1 8.500c0-1.800.7-3.400 1.800-4.600-.5-.8-.6-1.800-.2-2.700z" fill="url(#ww)"/><ellipse cx="7.400" cy="7.400" rx=".8" ry="1" fill="#0b55d8"/><ellipse cx="10.800" cy="7.400" rx=".8" ry="1" fill="#0b55d8"/></svg>
<div class="t " style="left:314px;top:830.5px;">Williams…</div>
<div class="t " style="left:440px;top:820.5px;">李<span style="font-size:17px;letter-spacing:.3px;position:relative;top:2.3px;line-height:10px">*</span></div>
<div class="t " style="left:487px;top:820.5px;">139<span style="font-size:17px;letter-spacing:.3px;position:relative;top:2.3px;line-height:10px">********</span></div>
<svg class="a" style="left:584px;top:822.0px;" width="16" height="17" viewBox="0 0 16 17" fill="none"><rect x="1.200" y="6.600" width="13.600" height="9.400" rx="1" stroke="#f47f78" stroke-width="1.300"/><path d="M4.600 6.600V4.600a3.400 3.400 0 0 1 6.800 0v.8" stroke="#f47f78" stroke-width="1.300" stroke-linecap="round"/><path d="M8 9.800v3M6.800 10.800h2.400" stroke="#f47f78" stroke-width="1.300" stroke-linecap="round"/></svg>
<div class="t " style="left:440px;top:840.5px;">浙江省杭州市西湖区<span style="font-size:17px;letter-spacing:.3px;position:relative;top:2.3px;line-height:10px">****</span></div>
<div class="t " style="left:665px;top:819.5px;">跨越速运专运(直…</div>
<div class="t " style="left:665px;top:844px;">KY0000115398…</div>
<div class="t b" style="left:839.5px;top:820.0px;letter-spacing:.2px">210121-6424205</div>
<div class="t b" style="left:839.5px;top:840.5px;letter-spacing:-.3px">75180912</div>
<svg class="a" style="left:904.5px;top:841.5px;" width="16" height="16" viewBox="0 0 16 16" fill="none"><path d="M2.600 3.600l2.800-3h10v10.400l-2.800 2.800z" fill="#a9c9f8"/><rect x=".9" y="3.400" width="11.600" height="11.600" rx=".3" fill="#fff" stroke="#1f72e8" stroke-width="1.250"/></svg>
<div class="t " style="left:973px;top:831px;letter-spacing:.75px">2020-08-27 16:32</div>
<div class="t " style="left:1121px;top:831px;">2</div>
<svg class="a" style="left:1188px;top:821px;" width="40" height="40" viewBox="0 0 40 40" fill="none"><rect width="40" height="40" fill="#f6f6f6"/><rect x="8" y="12.5" width="26" height="15.5" rx="1.5" fill="#21cfc1"/><rect x="8" y="12.5" width="26" height="2.2" rx="1" fill="#4adbd0"/><rect y="30" width="40" height="10" fill="#a8a8a8" fill-opacity=".92"/><text x="20" y="39" font-size="11" fill="#f4f4f4" text-anchor="middle" font-family="Liberation Sans, sans-serif">x2</text></svg>
<div class="a" style="left:1236px;top:821px;width:73px;height:40px;overflow:hidden"><div class="t" style="left:0;top:0;letter-spacing:.3px">Color Block</div><div class="t" style="left:0;top:20px">蒂芙尼手提</div></div>
<div class="a " style="left:1299px;top:360px;width:10px;height:540px;background:linear-gradient(90deg,rgba(0,0,0,0),rgba(0,0,0,.045))"></div>
<div class="a " style="left:1309px;top:360px;width:91px;height:540px;background:#fff"></div>
<div class="a " style="left:1309px;top:360px;width:91px;height:38px;background:#f5f7fa"></div>
<div class="t " style="left:1324.5px;top:368.5px;font-weight:500;color:#222">操作</div>
<div class="a " style="left:1309px;top:480px;width:91px;height:1px;background:#eceef2"></div>
<div class="a " style="left:1309px;top:560px;width:91px;height:1px;background:#eceef2"></div>
<div class="a " style="left:1309px;top:699.5px;width:91px;height:1px;background:#eceef2"></div>
<div class="a " style="left:1309px;top:800px;width:91px;height:1px;background:#eceef2"></div>
<div class="t b" style="left:1324.5px;top:419.5px;">一单多包</div>
<div class="t b" style="left:1324.5px;top:443px;">详情</div>
<svg class="a" style="left:1358.0px;top:448.5px;" width="12" height="11" viewBox="0 0 12 11" fill="none"><path d="M1.5 1.5l4.5 3.8 4.5-3.8M1.5 5.8l4.5 3.8 4.5-3.8" stroke="#1f72e8" stroke-width="1.2" stroke-linecap="round" stroke-linejoin="round"/></svg>
<div class="t b" style="left:1322.5px;top:511px;">详情</div>
<svg class="a" style="left:1356.0px;top:516.5px;" width="12" height="11" viewBox="0 0 12 11" fill="none"><path d="M1.5 1.5l4.5 3.8 4.5-3.8M1.5 5.8l4.5 3.8 4.5-3.8" stroke="#1f72e8" stroke-width="1.2" stroke-linecap="round" stroke-linejoin="round"/></svg>
<div class="t b" style="left:1322.5px;top:609.5px;">一单多包</div>
<div class="t b" style="left:1322.5px;top:633px;">详情</div>
<svg class="a" style="left:1356.0px;top:638.5px;" width="12" height="11" viewBox="0 0 12 11" fill="none"><path d="M1.5 1.5l4.5 3.8 4.5-3.8M1.5 5.8l4.5 3.8 4.5-3.8" stroke="#1f72e8" stroke-width="1.2" stroke-linecap="round" stroke-linejoin="round"/></svg>
<div class="t b" style="left:1322.5px;top:741px;">详情</div>
<svg class="a" style="left:1356.0px;top:746.5px;" width="12" height="11" viewBox="0 0 12 11" fill="none"><path d="M1.5 1.5l4.5 3.8 4.5-3.8M1.5 5.8l4.5 3.8 4.5-3.8" stroke="#1f72e8" stroke-width="1.2" stroke-linecap="round" stroke-linejoin="round"/></svg>
<div class="t b" style="left:1322.5px;top:831px;">详情</div>
<svg class="a" style="left:1356.0px;top:836.5px;" width="12" height="11" viewBox="0 0 12 11" fill="none"><path d="M1.5 1.5l4.5 3.8 4.5-3.8M1.5 5.8l4.5 3.8 4.5-3.8" stroke="#1f72e8" stroke-width="1.2" stroke-linecap="round" stroke-linejoin="round"/></svg>
<div class="a " style="left:200px;top:840.5px;width:1240px;height:60px;background:#fff;border-top:1px solid #e4e7ec;box-shadow:0 -1px 4px rgba(0,0,0,.03)"></div>
<div class="t " style="left:241.5px;top:860px;color:#999">已选择 <b style="color:#1f72e8">4</b> 项</div>
<div class="a btn" style="left:589px;top:850px;width:108px;height:40px;background:#7a4fd8"></div>
<svg class="a" style="left:600px;top:863px;" width="13" height="14" viewBox="0 0 13 14" fill="none"><path d="M3.300 4V1.600h6.400V4M3.300 12.400v-4h6.400v4zM1.300 9.400h2M9.700 9.400h2V5.600A1.600 1.600 0 0 0 10.100 4H2.900a1.600 1.600 0 0 0-1.600 1.600v3.800" stroke="#fff" stroke-width="1.200" stroke-linejoin="round"/></svg>
<div class="t " style="left:618px;top:860px;color:#fff">打印快递单</div>
<div class="a btn" style="left:707px;top:850px;width:108px;height:40px;background:#1db8ae"></div>
<svg class="a" style="left:717px;top:863px;" width="14" height="14" viewBox="0 0 14 14" fill="none"><path d="M7 1.200l5.400 2.600v6.400L7 12.800 1.600 10.200V3.800zM7 6.400v6.400M1.600 3.800L7 6.400l5.400-2.600M4.300 2.500l5.400 2.600v2.400" stroke="#fff" stroke-width="1.100" stroke-linejoin="round"/></svg>
<div class="t " style="left:735.5px;top:860px;color:#fff">打印发货单</div>
<div class="a btn" style="left:825px;top:850px;width:108px;height:40px;background:#f0954b"></div>
<svg class="a" style="left:855px;top:864px;opacity:.78" width="16" height="12" viewBox="0 0 16 12" fill="none"><path d="M1 1.200h8.600v8H1zM9.600 4h3.200l2.200 2.400v2.800H9.600z" stroke="#fff" stroke-width="1.100" stroke-linejoin="round"/><circle cx="4.400" cy="9.600" r="1.500" fill="#f0954b" stroke="#fff" stroke-width="1"/><circle cx="12" cy="9.600" r="1.500" fill="#f0954b" stroke="#fff" stroke-width="1"/></svg>
<div class="t " style="left:877px;top:860px;color:rgba(255,255,255,.78)">发货</div>
<div class="a btn" style="left:943px;top:850px;width:108px;height:40px;background:#fff;border:1px solid #1f72e8"></div>
<svg class="a" style="left:961px;top:863px;" width="14" height="14" viewBox="0 0 14 14" fill="none"><rect x="1" y="1" width="4.800" height="4.800" stroke="#1f72e8" stroke-width="1.200"/><rect x="8.200" y="1" width="4.800" height="4.800" stroke="#1f72e8" stroke-width="1.200"/><rect x="1" y="8.200" width="4.800" height="4.800" stroke="#1f72e8" stroke-width="1.200"/><rect x="8.200" y="8.200" width="4.800" height="4.800" stroke="#1f72e8" stroke-width="1.200"/></svg>
<div class="t b" style="left:981px;top:860px;">更多操作</div>
</div></body></html>
